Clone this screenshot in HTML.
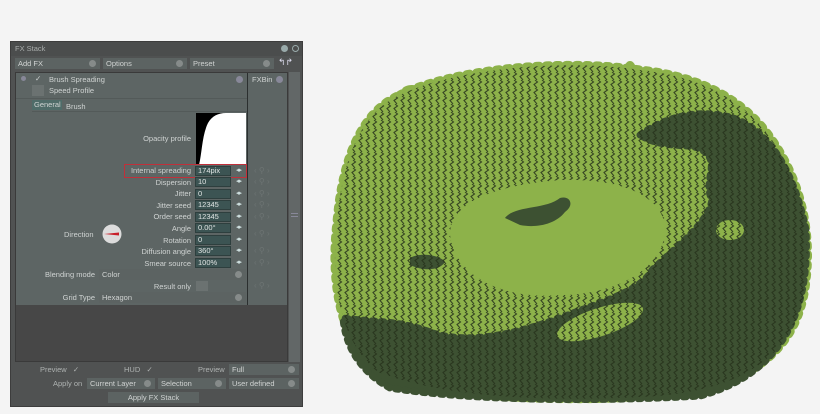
<!DOCTYPE html>
<html><head><style>
*{margin:0;padding:0;box-sizing:border-box}
body{width:820px;height:414px;background:#f4f4f4;position:relative;overflow:hidden;font-family:"Liberation Sans",sans-serif;font-size:7.5px;color:#cfd3d2}
.a{position:absolute}
.dd{position:absolute;background:#5c6362;height:11px;line-height:11px;padding-left:3px;color:#d0d3d2}
.dd:after{content:"";position:absolute;right:4px;top:2px;width:7px;height:7px;border-radius:50%;background:#868b8a}
.lbl{position:absolute;text-align:right;width:120px;height:11px;line-height:11px}
.in{position:absolute;left:195px;width:36px;height:10px;background:#3c5453;border:1px solid #2e3f3e;line-height:8px;padding-left:2px;color:#dfe3e2}
.arr{position:absolute;left:236px;font-size:7px;color:#cdd;letter-spacing:-1px}
.ic{position:absolute;left:254px;width:28px;height:9px;color:#6d7473;font-size:8px;line-height:9px}
</style></head><body>
<div class="a" style="left:10px;top:41px;width:293px;height:366px;background:#505252;border:1px solid #3d3d3d"></div>
<div class="a" style="left:11px;top:42px;width:291px;height:14px;background:#4b4d4d;line-height:14px;padding-left:4px;color:#a9adac">FX Stack</div>
<div class="a" style="left:281px;top:45px;width:7px;height:7px;border-radius:50%;background:#9aa"></div>
<div class="a" style="left:292px;top:45px;width:7px;height:7px;border-radius:50%;border:1px solid #9aa"></div>
<div class="dd" style="left:15px;top:58px;width:85px">Add FX</div>
<div class="dd" style="left:103px;top:58px;width:84px">Options</div>
<div class="dd" style="left:190px;top:58px;width:84px">Preset</div>
<div class="a" style="left:278px;top:57px;color:#dde;font-size:9px">↰↱</div>
<div class="a" style="left:15px;top:72px;width:273px;height:290px;background:#474747;border:1px solid #3a3a3a"></div>
<div class="a" style="left:16px;top:73px;width:231px;height:232px;background:#5d6564"></div>
<div class="a" style="left:247px;top:73px;width:1px;height:232px;background:#2b2f2f"></div>
<div class="a" style="left:248px;top:73px;width:39px;height:232px;background:#5d6564"></div>
<div class="a" style="left:289px;top:72px;width:11px;height:290px;background:#626767"></div>
<div class="a" style="left:291px;top:213px;width:7px;height:4px;border-top:1px solid #889;border-bottom:1px solid #889"></div>
<div class="a" style="left:21px;top:76px;width:5px;height:5px;border-radius:50%;background:#889"></div>
<div class="a" style="left:35px;top:73px;line-height:11px">✓</div>
<div class="a" style="left:49px;top:74px;line-height:11px">Brush Spreading</div>
<div class="a" style="left:236px;top:76px;width:7px;height:7px;border-radius:50%;background:#889"></div>
<div class="a" style="left:252px;top:74px;line-height:11px">FXBin</div>
<div class="a" style="left:276px;top:76px;width:7px;height:7px;border-radius:50%;background:#889"></div>
<div class="a" style="left:32px;top:85px;width:12px;height:11px;background:#6b7271"></div>
<div class="a" style="left:49px;top:85px;line-height:11px">Speed Profile</div>
<div class="a" style="left:16px;top:98px;width:231px;height:1px;background:#535a59"></div>
<div class="a" style="left:32px;top:100px;width:30px;height:10px;background:#4f6c69;line-height:10px;padding-left:2px">General</div>
<div class="a" style="left:66px;top:101px;line-height:11px">Brush</div>
<div class="a" style="left:32px;top:111px;width:215px;height:1px;background:#535a59"></div>
<div class="lbl" style="left:71px;top:133px">Opacity profile</div>
<svg class="a" style="left:196px;top:113px" width="50" height="52"><rect width="50" height="52" fill="#000"/><path d="M3 52C6 40 6 22 12 10 16 3 22 0 30 0H50V52Z" fill="#fff"/></svg>
<div class="a" style="left:124px;top:164px;width:123px;height:14px;border:1.5px solid #c0303a"></div>
<div class="lbl" style="left:71px;top:165px">Internal spreading</div><div class="in" style="top:166px">174pix</div><div class="arr" style="top:166px">◂▸</div><div class="ic" style="top:166px">‹ ⚲ ›</div>
<div class="lbl" style="left:71px;top:177px">Dispersion</div><div class="in" style="top:177px">10</div><div class="arr" style="top:177px">◂▸</div><div class="ic" style="top:177px">‹ ⚲ ›</div>
<div class="lbl" style="left:71px;top:188px">Jitter</div><div class="in" style="top:189px">0</div><div class="arr" style="top:189px">◂▸</div><div class="ic" style="top:189px">‹ ⚲ ›</div>
<div class="lbl" style="left:71px;top:200px">Jitter seed</div><div class="in" style="top:200px">12345</div><div class="arr" style="top:200px">◂▸</div><div class="ic" style="top:200px">‹ ⚲ ›</div>
<div class="lbl" style="left:71px;top:211px">Order seed</div><div class="in" style="top:212px">12345</div><div class="arr" style="top:212px">◂▸</div><div class="ic" style="top:212px">‹ ⚲ ›</div>
<div class="lbl" style="left:71px;top:223px">Angle</div><div class="in" style="top:223px">0.00°</div><div class="arr" style="top:223px">◂▸</div>
<div class="ic" style="top:229px">‹ ⚲ ›</div>
<div class="lbl" style="left:71px;top:235px">Rotation</div><div class="in" style="top:235px">0</div><div class="arr" style="top:235px">◂▸</div>
<div class="lbl" style="left:71px;top:246px">Diffusion angle</div><div class="in" style="top:246px">360°</div><div class="arr" style="top:246px">◂▸</div><div class="ic" style="top:246px">‹ ⚲ ›</div>
<div class="lbl" style="left:71px;top:258px">Smear source</div><div class="in" style="top:258px">100%</div><div class="arr" style="top:258px">◂▸</div><div class="ic" style="top:258px">‹ ⚲ ›</div>
<div class="a" style="left:64px;top:229px;line-height:11px">Direction</div>
<svg class="a" style="left:102px;top:224px" width="20" height="20"><circle cx="10" cy="10" r="9.5" fill="#dcdcdc"/><path d="M2 10L17 8.5V11.5Z" fill="#c8202a"/></svg>
<div class="a" style="left:16px;top:269px;width:79px;text-align:right;line-height:11px">Blending mode</div>
<div class="dd" style="left:99px;top:269px;width:147px">Color</div>
<div class="lbl" style="left:71px;top:281px">Result only</div>
<div class="a" style="left:196px;top:281px;width:12px;height:10px;background:#6b7271"></div>
<div class="ic" style="top:281px">‹ ⚲ ›</div>
<div class="a" style="left:16px;top:292px;width:79px;text-align:right;line-height:11px">Grid Type</div>
<div class="dd" style="left:99px;top:292px;width:147px">Hexagon</div>
<div class="a" style="left:40px;top:364px;line-height:11px;color:#aeb2b1">Preview &nbsp;&nbsp;✓</div>
<div class="a" style="left:124px;top:364px;line-height:11px;color:#aeb2b1">HUD &nbsp;&nbsp;✓</div>
<div class="a" style="left:198px;top:364px;line-height:11px;color:#aeb2b1">Preview</div>
<div class="dd" style="left:229px;top:364px;width:70px">Full</div>
<div class="a" style="left:53px;top:378px;line-height:11px;color:#aeb2b1">Apply on</div>
<div class="dd" style="left:87px;top:378px;width:68px">Current Layer</div>
<div class="dd" style="left:158px;top:378px;width:68px">Selection</div>
<div class="dd" style="left:229px;top:378px;width:70px">User defined</div>
<div class="a" style="left:108px;top:392px;width:91px;height:11px;background:#5c6362;text-align:center;line-height:11px">Apply FX Stack</div>

<svg class="a" style="left:0;top:0" width="820" height="414">
<defs>
<pattern id="z" width="7" height="8" patternUnits="userSpaceOnUse"><path d="M3 0L5.5 2L2 4.5L5 8" fill="none" stroke="#27331c" stroke-width="1.1" opacity=".85"/></pattern>
<mask id="m"><rect width="820" height="414" fill="#fff"/><path d="M450 235C450 200 500 185 560 180C620 178 660 195 665 225C668 265 620 295 560 295C500 300 455 275 450 235Z" fill="#000"/></mask>
<clipPath id="cl"><path d="M340 300H820V414H340Z"/></clipPath>
</defs>
<path d="M400 95C450 70 560 58 640 70C700 76 745 100 772 140C800 180 812 230 806 280C800 340 762 392 640 397C560 401 450 400 378 372C340 342 330 282 337 222C342 162 360 112 400 95Z" fill="#8db24a" stroke="#8db24a" stroke-width="9" stroke-dasharray="3 7" stroke-linecap="round"/>
<ellipse cx="412" cy="90" rx="10" ry="5" fill="#8db24a"/><ellipse cx="630" cy="70" rx="6" ry="9" fill="#8db24a"/>
<path d="M640 135C660 120 690 110 720 115C760 120 792 160 806 230C810 300 790 372 700 396C600 402 470 401 390 388C360 372 345 345 343 318C370 322 400 320 430 332C470 346 520 332 560 318C600 302 640 292 652 270C682 242 708 222 712 200C702 180 722 162 702 150C690 142 662 150 640 135Z" fill="#3d5132" stroke="#3d5132" stroke-width="7" stroke-dasharray="3 6" stroke-linecap="round"/>
<path d="M505 218C515 205 545 210 560 198C570 195 575 205 565 212C555 225 535 228 520 225Z" fill="#3d5132"/>
<path d="M410 258C420 252 440 255 445 262C440 270 425 272 410 265Z" fill="#3d5132"/>
<ellipse cx="600" cy="322" rx="45" ry="14" transform="rotate(-18 600 322)" fill="#8db24a"/>
<ellipse cx="730" cy="230" rx="14" ry="10" fill="#8db24a"/>
<path d="M400 95C450 70 560 58 640 70C700 76 745 100 772 140C800 180 812 230 806 280C800 340 762 392 640 397C560 401 450 400 378 372C340 342 330 282 337 222C342 162 360 112 400 95Z" fill="url(#z)" mask="url(#m)"/>
</svg>
</body></html>
